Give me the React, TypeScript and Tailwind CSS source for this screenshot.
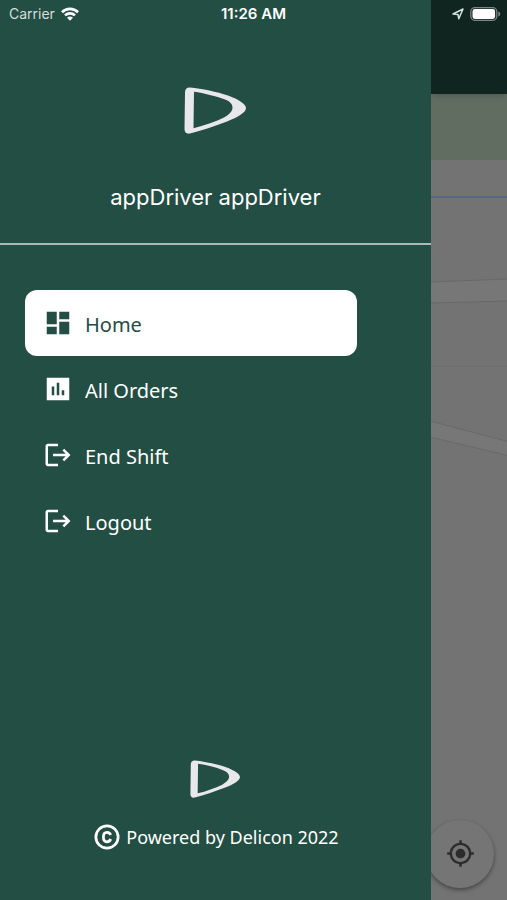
import { useState } from "react";
import { MdDashboard, MdLogout, MdMyLocation } from "react-icons/md";

function ChartIcon({ size }: { size: number }) {
  return (
    <svg viewBox="0 0 24 24" width={size} height={size} fill="currentColor" aria-hidden="true">
      <path
        fillRule="evenodd"
        d="M3 3H21V21H3ZM7 10V17H9V10ZM11 7V17H13V7ZM15 13V17H17V13Z"
      />
    </svg>
  );
}

function CopyrightIcon({ size }: { size: number }) {
  return (
    <svg
      viewBox="0 0 24 24"
      width={size}
      height={size}
      fill="none"
      stroke="currentColor"
      strokeWidth="2.200"
      aria-hidden="true"
    >
      <circle cx="12" cy="12" r="8.900" />
      <path d="M14.900 10.400C14.500 9 13.500 8.200 12 8.200C10.100 8.200 9.100 9.600 9.100 12C9.100 14.400 10.100 15.800 12 15.800C13.500 15.800 14.500 15 14.900 13.600" />
    </svg>
  );
}

const menuItems = [
  { label: "Home", icon: MdDashboard },
  { label: "All Orders", icon: ChartIcon },
  { label: "End Shift", icon: MdLogout },
  { label: "Logout", icon: MdLogout },
];

function Logo({ className }: { className: string }) {
  return (
    <svg viewBox="0 0 62 47" className={className} aria-hidden="true">
      <path
        fill="#e8e8ea"
        fillRule="evenodd"
        d="M6 0.500C18 1.800 33 4.800 44 8.500C56 13 62 17.500 62 21C62 25.500 54 30 43 34.500C30 39.500 18 43.500 6 46.500C2.500 47.200 0.500 45.500 0.500 42L1 5.500C1 2 3 0.300 6 0.500ZM10 4.700L9.500 41.300C20 38.500 31 35 40 30.500C46 27 48.500 24 48.500 20.500C48.500 17 46 14.500 41 12.500C32 9 20 6.200 10 4.700Z"
      />
    </svg>
  );
}

function StatusBar() {
  return (
    <header className="absolute inset-x-0 top-0 z-20 grid h-7 grid-cols-3 items-center px-1.5 font-['Inter',sans-serif] text-sm text-white">
      <div className="flex items-center gap-1.5 pl-[3px] text-[#d5dfdc]">
        <span>Carrier</span>
        <svg viewBox="0 0 18 14" className="h-[14px] w-[18px]" aria-hidden="true">
          <g fill="none" stroke="#fff" strokeWidth="2.700">
            <path d="M1 5.200C5.500 0.800 12.500 0.800 17 5.200" />
            <path d="M4 8.400C6.800 5.700 11.200 5.700 14 8.400" />
          </g>
          <path fill="#fff" d="M6 10.700C7.700 9 10.300 9 12 10.700L9 13.800Z" />
        </svg>
      </div>
      <span className="text-center text-[15px] font-semibold">11:26 AM</span>
      <div className="flex items-center justify-end gap-1.5">
        <svg viewBox="0 0 12 12" className="size-3" aria-hidden="true">
          <path
            d="M1 6L11 1L6.800 10.800L6 6.500Z"
            fill="none"
            stroke="#d5dfdc"
            strokeWidth="1.500"
            strokeLinejoin="round"
          />
        </svg>
        <svg viewBox="0 0 31 15" className="h-[15px] w-[31px]" aria-hidden="true">
          <rect x="0.800" y="0.700" width="26" height="12.600" rx="4" fill="none" stroke="#7c8683" strokeWidth="1.300" />
          <rect x="2.500" y="2.100" width="22.600" height="9.800" rx="2.300" fill="#fff" />
          <path fill="#7c8683" d="M28.300 4.500C30.900 5.500 30.900 8.500 28.300 9.500Z" />
        </svg>
      </div>
    </header>
  );
}

function Drawer() {
  const [active, setActive] = useState("Home");

  return (
    <aside className="z-10 flex w-[85%] shrink-0 flex-col bg-[#234e43] text-white">
      <div className="flex flex-col items-center border-b-2 border-[#a9bbb6] pt-[87px] pb-[31px]">
        <Logo className="h-[47px] w-[62px]" />
        <h1 className="mt-12 font-['Inter',sans-serif] text-[22px] leading-[30px]">
          appDriver appDriver
        </h1>
      </div>

      <nav className="mt-[45px] ml-[25px] flex w-[77%] flex-col">
        {menuItems.map(({ label, icon: Icon }) => (
          <button
            key={label}
            type="button"
            onClick={() => setActive(label)}
            className={
              active === label
                ? "flex h-[66px] items-center gap-3 rounded-xl bg-white px-[18px] text-[#234e43]"
                : "flex h-[66px] items-center gap-3 rounded-xl px-[18px] text-white"
            }
          >
            <Icon size={30} />
            <span className="pt-1 font-['Noto_Sans',sans-serif] text-xl">{label}</span>
          </button>
        ))}
      </nav>

      <footer className="mt-auto flex flex-col items-center pb-12">
        <Logo className="h-[38px] w-[50px]" />
        <p className="mt-6 flex items-center gap-1 pb-px font-['Noto_Sans',sans-serif] text-lg">
          <CopyrightIcon size={30} />
          Powered by Delicon 2022
        </p>
      </footer>
    </aside>
  );
}

function MapPanel() {
  return (
    <main className="relative flex min-w-0 flex-1 flex-col overflow-hidden bg-[#737373]">
      <div className="z-10 h-[94px] bg-[#112520] shadow-md" />
      <div className="h-[66px] bg-[#626d62]" />
      <svg
        viewBox="0 0 76 740"
        preserveAspectRatio="xMinYMin slice"
        className="w-full flex-1"
        aria-hidden="true"
      >
        <path d="M0 37H76" stroke="#566786" strokeWidth="2" />
        <path d="M0 122L76 119V141L0 143Z" fill="#777" />
        <path d="M0 122L76 119M0 143L76 141" stroke="#696969" />
        <path d="M0 206H76" stroke="#6e6e6e" />
        <path d="M0 261L76 281V295L0 277Z" fill="#777" />
        <path d="M0 261L76 281M0 277L76 295" stroke="#696969" />
      </svg>
      <button
        type="button"
        aria-label="My location"
        className="absolute right-[13px] bottom-[13px] flex size-[68px] items-center justify-center rounded-full bg-[#757575] text-[#2c2c2c] shadow-[0_2px_4px_rgba(0,0,0,0.4)]"
      >
        <MdMyLocation size={29} />
      </button>
    </main>
  );
}

function App() {
  return (
    <div className="relative flex min-h-screen">
      <StatusBar />
      <Drawer />
      <MapPanel />
    </div>
  );
}

export default App;
